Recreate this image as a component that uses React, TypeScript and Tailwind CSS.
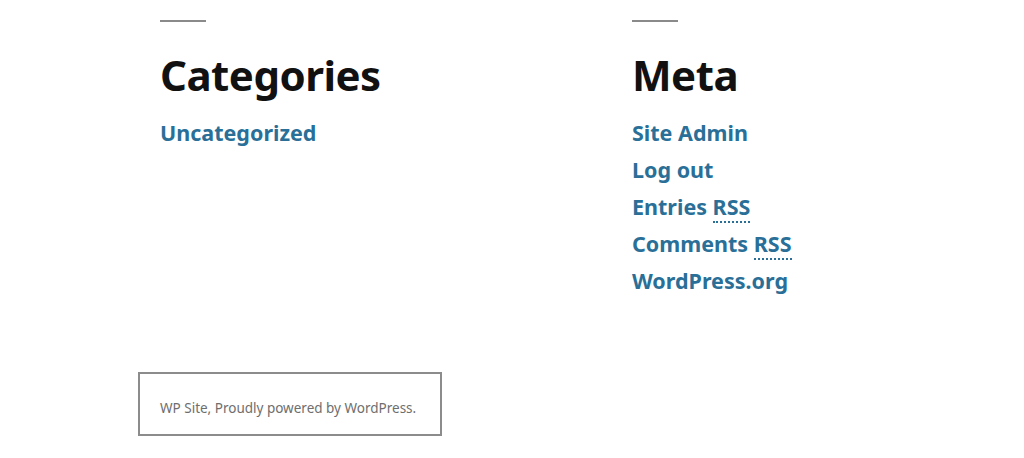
import React from 'react';

const font = { fontFamily: '"Noto Sans", "Open Sans", sans-serif' };

function Widget({ title, links }: { title: string; links: React.ReactNode[] }) {
  return (
    <section className="w-[472px] shrink-0">
      <div className="w-[46px] h-[2px] bg-[#8a8a8a]" />
      <h2 className="mt-[27px] text-[42px] leading-[52px] font-bold text-[#111] tracking-[-0.5px]">{title}</h2>
      <ul className="mt-[13px]">
        {links.map((l, i) => (
          <li key={i} className="text-[21.5px] leading-[37px] font-bold text-[#2a6f97]">
            {l}
          </li>
        ))}
      </ul>
    </section>
  );
}

const Rss = () => (
  <abbr className="no-underline border-b-2 border-dotted border-[#2a6f97] pb-0">RSS</abbr>
);

export default function App() {
  return (
    <div className="w-[1024px] h-[458px] bg-white overflow-hidden pt-[20px]" style={font}>
      <div className="flex ml-[160px]">
        <Widget title="Categories" links={['Uncategorized']} />
        <Widget
          title="Meta"
          links={[
            'Site Admin',
            'Log out',
            <span key="e">Entries <Rss /></span>,
            <span key="c">Comments <Rss /></span>,
            'WordPress.org',
          ]}
        />
      </div>
      <footer className="ml-[138px] mt-[73px] w-[304px] h-[64px] border-2 border-[#8c8c8c] flex items-center pl-[20px] pt-[8px]">
        <p className="text-[13.5px] text-[#6e6e6e]">WP Site, Proudly powered by WordPress.</p>
      </footer>
    </div>
  );
}
